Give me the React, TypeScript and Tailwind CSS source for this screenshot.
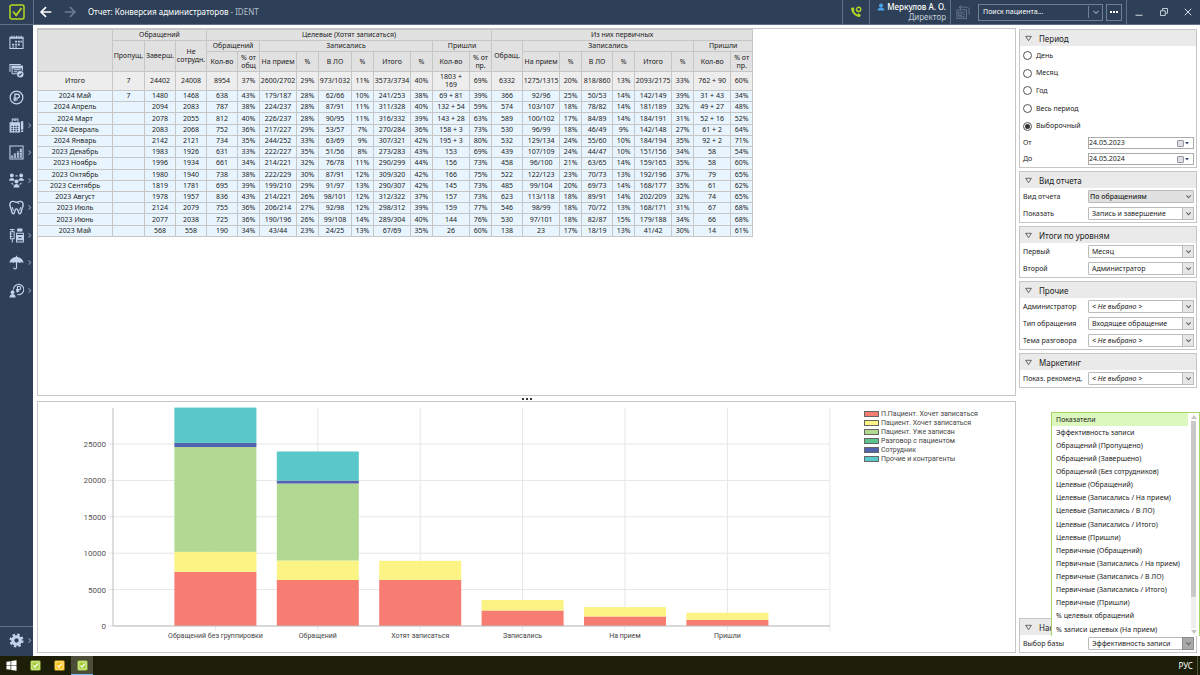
import { useState } from "react";
import type { ReactNode } from "react";

interface ReportRow {
  label: string;
  values: string[];
}

interface Series {
  name: string;
  color: string;
}

interface Bar {
  label: string;
  stops: number[];
}

const COLUMN_WIDTHS = [
  75, 32, 31, 31, 31, 22, 37, 22, 33, 22, 37, 22, 37, 22, 31, 37, 22, 31, 22,
  37, 22, 37, 22,
];

const totals: ReportRow = {
  label: "Итого",
  values: "7|24402|24008|8954|37%|2600/2702|29%|973/1032|11%|3573/3734|40%|1803 +\n169|69%|6332|1275/1315|20%|818/860|13%|2093/2175|33%|762 + 90|60%".split("|"),
};

const months: ReportRow[] = [
  ["2024 Май", "7|1480|1468|638|43%|179/187|28%|62/66|10%|241/253|38%|69 + 81|39%|366|92/96|25%|50/53|14%|142/149|39%|31 + 43|34%"],
  ["2024 Апрель", "|2094|2083|787|38%|224/237|28%|87/91|11%|311/328|40%|132 + 54|59%|574|103/107|18%|78/82|14%|181/189|32%|49 + 27|48%"],
  ["2024 Март", "|2078|2055|812|40%|226/237|28%|90/95|11%|316/332|39%|143 + 28|63%|589|100/102|17%|84/89|14%|184/191|31%|52 + 16|52%"],
  ["2024 Февраль", "|2083|2068|752|36%|217/227|29%|53/57|7%|270/284|36%|158 + 3|73%|530|96/99|18%|46/49|9%|142/148|27%|61 + 2|64%"],
  ["2024 Январь", "|2142|2121|734|35%|244/252|33%|63/69|9%|307/321|42%|195 + 3|80%|532|129/134|24%|55/60|10%|184/194|35%|92 + 2|71%"],
  ["2023 Декабрь", "|1983|1926|631|33%|222/227|35%|51/56|8%|273/283|43%|153|69%|439|107/109|24%|44/47|10%|151/156|34%|58|54%"],
  ["2023 Ноябрь", "|1996|1934|661|34%|214/221|32%|76/78|11%|290/299|44%|156|73%|458|96/100|21%|63/65|14%|159/165|35%|58|60%"],
  ["2023 Октябрь", "|1980|1940|738|38%|222/229|30%|87/91|12%|309/320|42%|166|75%|522|122/123|23%|70/73|13%|192/196|37%|79|65%"],
  ["2023 Сентябрь", "|1819|1781|695|39%|199/210|29%|91/97|13%|290/307|42%|145|73%|485|99/104|20%|69/73|14%|168/177|35%|61|62%"],
  ["2023 Август", "|1978|1957|836|43%|214/221|26%|98/101|12%|312/322|37%|157|73%|623|113/118|18%|89/91|14%|202/209|32%|74|65%"],
  ["2023 Июль", "|2124|2079|755|36%|206/214|27%|92/98|12%|298/312|39%|159|77%|546|98/99|18%|70/72|13%|168/171|31%|67|68%"],
  ["2023 Июнь", "|2077|2038|725|36%|190/196|26%|99/108|14%|289/304|40%|144|76%|530|97/101|18%|82/87|15%|179/188|34%|66|68%"],
  ["2023 Май", "|568|558|190|34%|43/44|23%|24/25|13%|67/69|35%|26|60%|138|23|17%|18/19|13%|41/42|30%|14|61%"],
].map(([label, values]) => ({ label, values: values.split("|") }));

const series: Series[] = [
  { name: "П.Пациент. Хочет записаться", color: "#f77d72" },
  { name: "Пациент. Хочет записаться", color: "#fbf383" },
  { name: "Пациент. Уже записан", color: "#b1d992" },
  { name: "Разговор с пациентом", color: "#5dc48f" },
  { name: "Сотрудник", color: "#5162ae" },
  { name: "Прочие и контрагенты", color: "#5ac7c9" },
];

// Cumulative tops of the stacked segments, in the order of the series
const bars: Bar[] = [
  { label: "Обращений без группировки", stops: [7450, 10180, 24580, 24580, 25150, 30000] },
  { label: "Обращений", stops: [6320, 9000, 19570, 19570, 19980, 23970] },
  { label: "Хотят записаться", stops: [6332, 8954] },
  { label: "Записались", stops: [2130, 3573] },
  { label: "На прием", stops: [1310, 2600] },
  { label: "Пришли", stops: [830, 1830] },
];

const indicators = [
  "Показатели",
  "Эффективность записи",
  "Обращений (Пропущено)",
  "Обращений (Завершено)",
  "Обращений (Без сотрудников)",
  "Целевые (Обращений)",
  "Целевые (Записались / На прием)",
  "Целевые (Записались / В ЛО)",
  "Целевые (Записались / Итого)",
  "Целевые (Пришли)",
  "Первичные (Обращений)",
  "Первичные (Записались / На прием)",
  "Первичные (Записались / В ЛО)",
  "Первичные (Записались / Итого)",
  "Первичные (Пришли)",
  "% целевых обращений",
  "% записи целевых (На прием)",
];

const periods = ["День", "Месяц", "Год", "Весь период", "Выборочный"];

function Icon({ children, className = "size-4" }: { children: ReactNode; className?: string }) {
  return (
    <svg
      viewBox="0 0 16 16"
      fill="none"
      stroke="currentColor"
      strokeWidth="1.1"
      className={className}
      aria-hidden="true"
    >
      {children}
    </svg>
  );
}

const navItems: { name: string; more: boolean; icon: ReactNode }[] = [
  {
    name: "Расписание",
    more: false,
    icon: (
      <>
        <path d="M1 2.500h14v12H1z" />
        <path d="M1 3.500h14M3 .8v2.400M5.500 .8v2.400M8 .8v2.400M10.500 .8v2.400M13 .8v2.400" />
        <path d="M6.500 6h2v2h-2zM9.500 6h2v2h-2zM12.300 6h1.500v2h-1.500zM3.300 9.300h2.200v2h-2.200zM6.500 9.300h2v2h-2zM9.500 9.300h2v2h-2zM3.300 12.200h2.200v1h-2.200zM6.500 12.200h2v1h-2z" fill="currentColor" stroke="none" />
      </>
    ),
  },
  {
    name: "Задачи",
    more: false,
    icon: (
      <>
        <path d="M1 9.500V1.500h11.500M3.300 11.500v-8h11v5" />
        <path d="M3.300 3.500h11v1.800h-11z" fill="currentColor" />
        <path d="M5 7.300h7.500M5 9.300h4M3.300 11.500h5" />
        <circle cx="12" cy="12" r="3.500" fill="currentColor" stroke="none" />
        <path d="M10.300 12l1.300 1.300 2.200-2.400" stroke="#2d4057" />
      </>
    ),
  },
  {
    name: "Финансы",
    more: false,
    icon: (
      <>
        <circle cx="8" cy="8" r="6.800" strokeWidth="1.300" />
        <path d="M6.300 12V4.500h2.700a2.100 2.100 0 0 1 0 4.200H4.700M4.700 10.500h4.600" strokeWidth="1.400" />
      </>
    ),
  },
  {
    name: "Касса",
    more: true,
    icon: (
      <>
        <path d="M3.500 4V1h6v3M5 2.500h3" />
        <path d="M1.200 5h10v10h-10z" fill="currentColor" />
        <path d="M2.600 8.200h1.600v1.400H2.600zM5.400 8.200H7v1.400H5.400zM8.200 8.200h1.600v1.400H8.200zM2.600 10.500h1.600v1.400H2.600zM5.400 10.500H7v1.400H5.400zM8.200 10.500h1.600v1.400H8.200zM2.600 12.700h1.600v1.400H2.600zM5.400 12.700H7v1.400H5.400zM8.200 12.700h1.600v1.400H8.200z" fill="#2d4057" stroke="none" />
        <path d="M12.700 3.500h2.500v9h-2.500zM12.700 13.300h2.500V15h-2.500z" fill="currentColor" stroke="none" />
      </>
    ),
  },
  {
    name: "Отчеты",
    more: true,
    icon: (
      <>
        <path d="M1 1h14v14H1z" />
        <path d="M3.300 13.500v-2.500M6.300 13.500V9M9.500 13.500V7M12.600 13.500V3.500" strokeWidth="2.300" strokeDasharray="1.600 .4" />
      </>
    ),
  },
  {
    name: "Персонал",
    more: true,
    icon: (
      <g fill="currentColor" stroke="none">
        <circle cx="3" cy="2.600" r="2" />
        <circle cx="13" cy="2.600" r="2" />
        <circle cx="8" cy="9" r="2.100" />
        <path d="M.100 8.200c0-4 5.800-4 5.800 0zM10.100 8.200c0-4 5.800-4 5.800 0zM4.800 15.500c0-5.200 6.400-5.200 6.400 0z" />
        <path d="M7 2.500h2v1.200H7zM3 10l2 2-.8.8-1.900-2zM13 10l-2 2 .8.8 1.900-2z" />
      </g>
    ),
  },
  {
    name: "Лечение",
    more: true,
    icon: (
      <>
        <path
          d="M4.600 1.500C2 1.200.7 3.200 1 5.800c.2 1.900 1.300 3 1.500 4.900.2 1.900 1 4.100 2.300 4.100 1.600 0 .8-5.300 3.200-5.300s1.600 5.300 3.200 5.300c1.300 0 2.100-2.200 2.300-4.100.2-1.900 1.300-3 1.500-4.900.3-2.600-1-4.600-3.600-4.300C9.800 1.700 9.300 2.300 8 2.300S6.200 1.700 4.600 1.500z"
          strokeWidth="1.500"
        />
        <path d="M8 2.300c1 .8 1.800 1.400 3 1.500M3.500 7.500c.4 1.500.9 2.500 1 4M12.500 7.500c-.4 1.500-.9 2.500-1 4" />
      </>
    ),
  },
  {
    name: "Склад",
    more: true,
    icon: (
      <>
        <path d="M1 1.500h5M3.500 1.500v2.500M1.500 4h4v7.500h-4zM3.500 11.500v4M1.500 6.500h2M1.500 9h2" />
        <path d="M9.300 1h4.500v2.300H9.300z" fill="currentColor" />
        <path d="M8 5.500h7.300V15H8z" />
        <path d="M8 8h7.300v4.500H8z" fill="currentColor" />
        <path d="M10 10.300h3.300" stroke="#2d4057" />
      </>
    ),
  },
  {
    name: "Страхование",
    more: true,
    icon: (
      <>
        <path d="M.500 8.500C.900 4.500 4 2 8 2s7.100 2.500 7.500 6.500c-1.300-1.200-3-1.200-4 0-1-1.200-2.500-1.200-3.500 0-1-1.200-2.500-1.200-3.500 0-1-1.200-2.700-1.200-4 0z" fill="currentColor" stroke="none" />
        <path d="M8 .800V13.300c0 2-3 2-3 0" strokeWidth="1.200" />
      </>
    ),
  },
  {
    name: "Зарплата",
    more: true,
    icon: (
      <>
        <path d="M4.800 7A5.500 5.500 0 1 1 9 12.300" strokeWidth="1.200" />
        <path d="M9 10V3.700h1.800a1.700 1.700 0 0 1 0 3.400H7.500M7.500 8.600h3.500" strokeWidth="1.200" />
        <circle cx="3.800" cy="9.800" r="2" fill="currentColor" stroke="none" />
        <path d="M.500 15.500c0-5 6.600-5 6.600 0z" fill="currentColor" stroke="none" />
      </>
    ),
  },
];

function Chevron({ className }: { className: string }) {
  return (
    <svg viewBox="0 0 8 8" fill="none" stroke="currentColor" strokeWidth="1.2" className={className} aria-hidden="true">
      <path d="M1.500 2.800L4 5.300l2.500-2.500" />
    </svg>
  );
}

function TitleBar() {
  return (
    <header className="flex h-[25px] shrink-0 items-stretch border-b border-[#5f7187] bg-[#2d4057] text-white">
      <div className="flex w-[34px] items-center justify-center border-r border-[#5f7187]">
        <svg viewBox="0 0 16 16" fill="none" stroke="#b5d721" className="size-4" aria-hidden="true">
          <rect x="1" y="1" width="14" height="14" rx="2" strokeWidth="1.5" />
          <path d="M4 7.500l3.200 3.800L12.500 4" strokeWidth="1.800" />
        </svg>
      </div>
      <div className="flex flex-1 items-center pl-1.5">
        <button aria-label="Назад" className="text-white">
          <Icon className="size-3">
            <path d="M15 8H2M8 1.500L1.500 8 8 14.500" strokeWidth="2.200" />
          </Icon>
        </button>
        <button aria-label="Вперед" className="ml-3 text-[#6b7c90]">
          <Icon className="size-3">
            <path d="M1 8h13M8 1.500L14.500 8 8 14.500" strokeWidth="2.200" />
          </Icon>
        </button>
        <h1 className="ml-3 text-[8px] leading-3">
          Отчет: Конверсия администраторов <span className="text-[#b4bfcc]">- IDENT</span>
        </h1>
      </div>
      <button aria-label="Звонки" className="flex w-[27px] items-center justify-center border-l border-[#5f7187] text-[#b5d721]">
        <Icon className="size-3">
          <path d="M1.500 2.500c0 6 5 11.500 11.500 12l1.500-2.500-3-2.200-1.700 1.500C7.500 10 6 8.500 5 6.300L6.300 5 4.500 1.500z" fill="currentColor" stroke="none" />
          <circle cx="11.500" cy="4.500" r="2.800" strokeWidth="1.800" />
        </Icon>
      </button>
      <div className="flex w-[82px] flex-col items-end justify-center border-x border-[#5f7187] pr-1">
        <div className="flex items-center gap-0.5 text-[8px] leading-[10px] font-medium whitespace-nowrap">
          <Icon className="size-2 text-[#4ba3e8]">
            <circle cx="8" cy="5" r="4" fill="currentColor" stroke="none" />
            <path d="M1 15c0-8 14-8 14 0z" fill="currentColor" stroke="none" />
          </Icon>
          Меркулов А. О.
        </div>
        <div className="text-[8px] leading-[10px] text-[#c5ced9]">Директор</div>
      </div>
      <div className="flex items-center pr-1 pl-[5px]">
        <button aria-label="Карта пациента" className="mr-2 text-[#65778c]">
          <Icon className="size-[14px]">
            <path d="M1 5.500h11v10H1zM3 8h3v4H3zM7.500 8.500H10M7.500 11H10M3 13.500h7M4 2.500h8c2 0 3 1 3 3V11M6 .5L3.500 2.500 6 4.500" />
          </Icon>
        </button>
        <div className="flex h-[17px] w-[125px] items-center border border-[#708196]">
          <input
            aria-label="Поиск пациента"
            placeholder="Поиск пациента..."
            className="min-w-0 flex-1 bg-transparent pl-1 text-[7px] leading-3 placeholder:text-white focus:outline-none"
          />
          <button aria-label="Открыть список" className="flex h-3 w-[14px] items-center justify-center border-l border-[#708196] text-[#8a99aa]">
            <Chevron className="size-2" />
          </button>
        </div>
        <button aria-label="Дополнительно" className="ml-[3px] flex h-[17px] w-4 items-center justify-center gap-px border border-[#708196]">
          <span className="size-0.5 bg-white" />
          <span className="size-0.5 bg-white" />
          <span className="size-0.5 bg-white" />
        </button>
      </div>
      <div className="flex w-[74px] items-center justify-between border-l border-[#5f7187] pr-2 pl-2 text-[#d5dce4]">
        <button aria-label="Свернуть">
          <Icon className="size-2">
            <path d="M1 14.500h14" strokeWidth="2" />
          </Icon>
        </button>
        <button aria-label="Восстановить">
          <Icon className="size-2">
            <path d="M1 5.500h9.500V15H1zM5 5V1h10v9.500h-4" strokeWidth="1.800" />
          </Icon>
        </button>
        <button aria-label="Закрыть">
          <Icon className="size-2">
            <path d="M1.500 1.500l13 13M14.500 1.500l-13 13" strokeWidth="2" />
          </Icon>
        </button>
      </div>
    </header>
  );
}

function Sidebar() {
  return (
    <nav className="flex w-[33px] shrink-0 flex-col bg-[#2d4057] text-[#c3d3ee]">
      <ul className="mt-1 flex h-[275px] flex-col">
        {navItems.map((item) => (
          <li key={item.name} className="flex flex-1 items-center">
            <button aria-label={item.name} className="flex w-full items-center pl-[9px]">
              <Icon className="size-[15px]">{item.icon}</Icon>
              {item.more && <Chevron className="ml-0.5 size-[7px] -rotate-90 text-[#8596ab]" />}
            </button>
          </li>
        ))}
      </ul>
      <button aria-label="Настройки" className="mt-auto flex h-[30px] items-center border-t border-[#5f7187] pb-0.5 pl-[9px]">
        <Icon className="size-[15px]">
          <circle cx="8" cy="8" r="4" strokeWidth="3.400" />
          <circle cx="8" cy="8" r="6.300" strokeWidth="2.400" strokeDasharray="2.600 2.350" />
        </Icon>
        <Chevron className="ml-0.5 size-[7px] -rotate-90 text-[#8596ab]" />
      </button>
    </nav>
  );
}

function Head({ children, col = 1, row = 1 }: { children?: ReactNode; col?: number; row?: number }) {
  return (
    <th colSpan={col} rowSpan={row} className="border border-[#c6c6c6] p-0 font-normal">
      {children}
    </th>
  );
}

function ReportTable() {
  return (
    <table className="h-[208px] w-[715px] table-fixed border-collapse text-center text-[7px] leading-[8px] text-[#222]">
      <colgroup>
        {COLUMN_WIDTHS.map((width, i) => (
          <col key={i} style={{ width }} />
        ))}
      </colgroup>
      <thead className="bg-[#e1e1e1]">
        <tr className="h-[11px]">
          <Head row={3} />
          <Head col={3}>Обращений</Head>
          <Head col={10}>Целевые (Хотят записаться)</Head>
          <Head col={9}>Из них первичных</Head>
        </tr>
        <tr className="h-[11px]">
          <Head row={2}>Пропущ.</Head>
          <Head row={2}>Заверш.</Head>
          <Head row={2}>Не сотрудн.</Head>
          <Head col={2}>Обращений</Head>
          <Head col={6}>Записались</Head>
          <Head col={2}>Пришли</Head>
          <Head row={2}>Обращ.</Head>
          <Head col={6}>Записались</Head>
          <Head col={2}>Пришли</Head>
        </tr>
        <tr className="h-[20px]">
          <Head>Кол-во</Head>
          <Head>% от общ</Head>
          <Head>На прием</Head>
          <Head>%</Head>
          <Head>В ЛО</Head>
          <Head>%</Head>
          <Head>Итого</Head>
          <Head>%</Head>
          <Head>Кол-во</Head>
          <Head>% от пр.</Head>
          <Head>На прием</Head>
          <Head>%</Head>
          <Head>В ЛО</Head>
          <Head>%</Head>
          <Head>Итого</Head>
          <Head>%</Head>
          <Head>Кол-во</Head>
          <Head>% от пр.</Head>
        </tr>
      </thead>
      <tbody className="bg-[#e8f5fe]">
        <tr className="h-[19px] bg-[#ededed]">
          <Head>{totals.label}</Head>
          {totals.values.map((value, i) => (
            <td key={i} className="border border-[#c6c6c6] p-0 whitespace-pre-line">
              {value}
            </td>
          ))}
        </tr>
        {months.map((month) => (
          <tr key={month.label}>
            <Head>{month.label}</Head>
            {month.values.map((value, i) => (
              <td key={i} className="border border-[#c6c6c6] p-0 whitespace-nowrap">
                {value}
              </td>
            ))}
          </tr>
        ))}
      </tbody>
    </table>
  );
}

const AXIS_X = 75;
const AXIS_Y = 224;
const STEP_X = 102.4;
const BAR_WIDTH = 82;
const scaleY = (value: number) => AXIS_Y - value * 0.00728;

function Chart() {
  return (
    <svg viewBox="0 0 800 248" className="w-[800px] shrink-0 self-start" role="img" aria-label="Показатели по этапам">
      {[0, 5000, 10000, 15000, 20000, 25000].map((tick) => (
        <g key={tick}>
          <path d={`M${AXIS_X - 5} ${scaleY(tick)}H${AXIS_X + STEP_X * 7}`} stroke="#e6e6e6" />
          <text x={AXIS_X - 7} y={scaleY(tick) + 3} textAnchor="end" fontSize="8" fill="#555" className="font-['Roboto',sans-serif]">
            {tick}
          </text>
        </g>
      ))}
      {[1, 2, 3, 4, 5, 6, 7].map((n) => (
        <path key={n} d={`M${AXIS_X + STEP_X * n} 6V${AXIS_Y + 5}`} stroke="#e6e6e6" />
      ))}
      {bars.map((bar, n) => {
        const center = AXIS_X + STEP_X * (n + 1);
        return (
          <g key={bar.label}>
            {bar.stops.map((stop, i) => (
              <rect
                key={i}
                x={center - BAR_WIDTH / 2}
                y={scaleY(stop)}
                width={BAR_WIDTH}
                height={scaleY(i > 0 ? bar.stops[i - 1] : 0) - scaleY(stop)}
                fill={series[i].color}
              />
            ))}
            <text x={center} y={AXIS_Y + 12} textAnchor="middle" fontSize="7" fill="#444" className="font-['Roboto',sans-serif]">
              {bar.label}
            </text>
          </g>
        );
      })}
      <path d={`M${AXIS_X} 6V${AXIS_Y}H${AXIS_X + STEP_X * 7}`} fill="none" stroke="#bdbdbd" />
    </svg>
  );
}

function Legend() {
  return (
    <ul className="mt-2 ml-[26px] flex h-[53px] flex-col font-['Roboto',sans-serif] text-[7px] leading-[8px] text-[#444]">
      {series.map((item) => (
        <li key={item.name} className="flex flex-1 items-center gap-0.5 whitespace-nowrap">
          <span className="h-[6px] w-[15px] border border-[#666]" style={{ backgroundColor: item.color }} />
          {item.name}
        </li>
      ))}
    </ul>
  );
}

function Panel({ title, children, className = "" }: { title: string; children: ReactNode; className?: string }) {
  return (
    <section className={`border border-[#c6c6c6] bg-white ${className}`}>
      <h2 className="h-4 bg-[#eaeaea] text-[8px] leading-[17px]">
        <button className="flex w-full items-center gap-[7px] pl-[5px]">
          <svg viewBox="0 0 8 8" fill="none" stroke="#555" className="size-[7px]" aria-hidden="true">
            <path d="M.7 1.500h6.600L4 6.500z" />
          </svg>
          {title}
        </button>
      </h2>
      {children}
    </section>
  );
}

interface SelectRowProps {
  id: string;
  label: string;
  value: string;
  variant?: "plain" | "grey" | "open";
}

function SelectRow({ id, label, value, variant = "plain" }: SelectRowProps) {
  const empty = value === "< Не выбрано >";
  return (
    <div className="flex h-[17px] items-center pr-0.5 pl-[3px]">
      <label htmlFor={id} className="flex-1 whitespace-nowrap">
        {label}
      </label>
      <div className="relative h-[13px] w-[106px]">
        <select
          id={id}
          className={`block h-full w-full appearance-none rounded-[1px] border border-[#bbb] text-[7px] focus:outline-none ${
            variant === "grey" ? "bg-[#e1e1e1] pl-px font-medium" : "bg-white pl-[3px]"
          } ${empty ? "italic" : ""}`}
        >
          <option>{value}</option>
        </select>
        <span
          className={`pointer-events-none absolute inset-y-0 right-0 flex w-3 items-center justify-center text-[#666] ${
            variant === "grey" ? "" : variant === "open" ? "border border-[#8c8c8c] bg-[#a9a9a9]" : "border border-[#bbb] bg-[#e6e6e6]"
          }`}
        >
          <Chevron className="size-[7px]" />
        </span>
      </div>
    </div>
  );
}

function DateRow({ id, label, initial }: { id: string; label: string; initial: string }) {
  const [value, setValue] = useState(initial);
  return (
    <div className="flex h-4 items-center pr-0.5 pl-[3px]">
      <label htmlFor={id} className="flex-1">
        {label}
      </label>
      <div className="flex h-3 w-[106px] items-center border border-[#aaa] pr-1">
        <input
          id={id}
          value={value}
          onChange={(e) => setValue(e.target.value)}
          className="min-w-0 flex-1 text-[7px] leading-[10px] focus:outline-none"
        />
        <button aria-label="Выбрать дату" className="flex items-center gap-px">
          <span className="size-[7px] rounded-[1px] border border-[#999] bg-[#dfe1ea]" />
          <svg viewBox="0 0 4 4" className="w-1" aria-hidden="true">
            <path d="M0 1h4L2 3.400z" fill="#3b4d74" />
          </svg>
        </button>
      </div>
    </div>
  );
}

function IndicatorList() {
  const [selected, setSelected] = useState(indicators[0]);
  return (
    <div className="absolute -right-1 bottom-4 flex h-[224px] w-[149px] border border-b-0 border-[#a5d667] bg-white">
      <ul role="listbox" aria-label="Показатели" className="flex flex-1 flex-col">
        {indicators.map((item) => (
          <li
            key={item}
            role="option"
            aria-selected={item === selected}
            onClick={() => setSelected(item)}
            className={`flex flex-1 items-center pl-1 whitespace-nowrap ${item === selected ? "bg-[#dcf8be]" : ""}`}
          >
            {item}
          </li>
        ))}
      </ul>
      <div className="flex w-[11px] flex-col items-center justify-between py-0.5">
        <svg viewBox="0 0 6 4" className="w-1.5" aria-hidden="true">
          <path d="M0 4h6L3 0z" fill="#c4c4c4" />
        </svg>
        <div className="my-0.5 w-[5px] flex-1 bg-[#eee]">
          <div className="h-[85%] bg-[#c9c9c9]" />
        </div>
        <svg viewBox="0 0 6 4" className="w-1.5" aria-hidden="true">
          <path d="M0 0h6L3 4z" fill="#c4c4c4" />
        </svg>
      </div>
    </div>
  );
}

function Filters() {
  const [period, setPeriod] = useState("Выборочный");

  return (
    <aside className="flex w-[181px] shrink-0 flex-col gap-[3px] pt-px pr-[3px] text-[7px] leading-[10px] text-[#1c1c1c]">
      <Panel title="Период">
        <div className="mt-px flex h-[88px] flex-col justify-around pl-[3px]">
          {periods.map((name) => (
            <label key={name} className="flex items-center gap-1">
              <input
                type="radio"
                name="period"
                checked={period === name}
                onChange={() => setPeriod(name)}
                className="size-[9px] appearance-none rounded-full border border-[#555] bg-white checked:bg-[#333] checked:bg-clip-content checked:p-px"
              />
              {name}
            </label>
          ))}
        </div>
        <DateRow id="date-from" label="От" initial="24.05.2023" />
        <DateRow id="date-to" label="До" initial="24.05.2024" />
      </Panel>
      <Panel title="Вид отчета">
        <SelectRow id="report-kind" label="Вид отчета" value="По обращениям" variant="grey" />
        <SelectRow id="report-show" label="Показать" value="Запись и завершение" />
      </Panel>
      <Panel title="Итоги по уровням">
        <SelectRow id="level-first" label="Первый" value="Месяц" />
        <SelectRow id="level-second" label="Второй" value="Администратор" />
      </Panel>
      <Panel title="Прочие">
        <SelectRow id="admin" label="Администратор" value="< Не выбрано >" />
        <SelectRow id="call-kind" label="Тип обращения" value="Входящее обращение" />
        <SelectRow id="call-topic" label="Тема разговора" value="< Не выбрано >" />
      </Panel>
      <Panel title="Маркетинг">
        <SelectRow id="marketing" label="Показ. рекоменд." value="< Не выбрано >" />
      </Panel>
      <Panel title="Настройки" className="relative mt-auto">
        <SelectRow id="base" label="Выбор базы" value="Эффективность записи" variant="open" />
        <IndicatorList />
      </Panel>
    </aside>
  );
}

function TaskIcon({ color }: { color: string }) {
  return (
    <svg viewBox="0 0 12 12" fill="none" className="size-[11px]" aria-hidden="true">
      <rect x=".5" y=".5" width="11" height="11" rx="1.5" fill={color} />
      <rect x="2" y="2" width="8" height="8" rx=".5" stroke="#fff" strokeWidth=".7" />
      <path d="M3.800 5.800l1.800 2L8.500 4" stroke="#fff" strokeWidth="1.300" />
    </svg>
  );
}

function Taskbar() {
  return (
    <footer className="flex h-[19px] shrink-0 items-stretch bg-[#1d1e08] text-white">
      <button aria-label="Пуск" className="flex w-[23px] items-center justify-center">
        <svg viewBox="0 0 12 12" fill="#fff" className="size-[11px]" aria-hidden="true">
          <path d="M.5 2L5 1.300v4.300H.5zM5.700 1.200L11.500.400v5.200H5.700zM.5 6.400H5v4.300L.5 10zM5.700 6.400h5.800v5.200l-5.800-.8z" />
        </svg>
      </button>
      <button aria-label="IDENT" className="flex w-6 items-center justify-center">
        <TaskIcon color="#a3cc33" />
      </button>
      <button aria-label="IDENT Архив" className="flex w-6 items-center justify-center">
        <TaskIcon color="#fbbf0d" />
      </button>
      <button aria-label="IDENT Отчеты" className="flex w-[22px] items-center justify-center border-b border-[#76b9ed] bg-[#4b4d39]">
        <TaskIcon color="#a3cc33" />
      </button>
      <div className="mr-0.5 ml-auto flex items-center border-r border-[#55563f] pr-1 text-[8px]">РУС</div>
    </footer>
  );
}

function App() {
  return (
    <div className="flex h-screen flex-col overflow-hidden bg-white font-['Noto_Sans','Open_Sans',sans-serif]">
      <TitleBar />
      <div className="flex min-h-0 flex-1">
        <Sidebar />
        <main className="flex min-w-0 flex-1 gap-[3px] pt-[3px] pb-[3px] pl-1">
          <div className="flex min-w-0 flex-1 flex-col">
            <div className="flex-1 overflow-hidden border border-[#c6c6c6]">
              <div className="-ml-px">
                <ReportTable />
              </div>
            </div>
            <div className="flex h-[5px] items-center justify-center gap-0.5">
              <span className="size-0.5 bg-[#333]" />
              <span className="size-0.5 bg-[#333]" />
              <span className="size-0.5 bg-[#333]" />
            </div>
            <div className="flex h-[252px] overflow-hidden border border-[#c6c6c6]">
              <Chart />
              <Legend />
            </div>
          </div>
          <Filters />
        </main>
      </div>
      <Taskbar />
    </div>
  );
}

export default App;
